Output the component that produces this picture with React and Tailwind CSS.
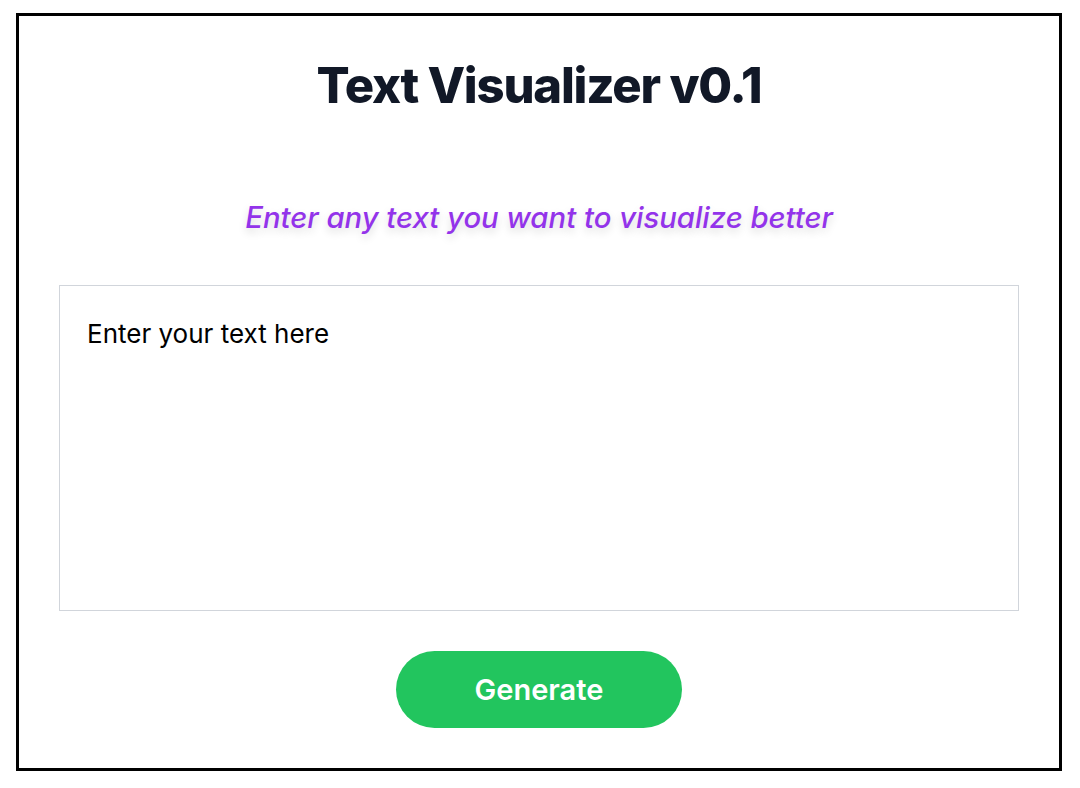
export default function App() {
    return (
        <div className="min-h-screen bg-white pt-[13px] pl-4 font-['Inter',sans-serif]">
            <div className="w-[1046px] border-[3px] border-black h-[758px] flex flex-col items-center px-10">
                <h1 className="mt-[45px] text-[49px] leading-[50px] font-extrabold text-[#111827] tracking-tight">
                    Text Visualizer v0.1
                </h1>
                <p className="mt-[89px] text-[29.3px] leading-[36px] italic font-medium text-[#9333ea] [text-shadow:0_4px_8px_rgba(0,0,0,0.15)]">
                    Enter any text you want to visualize better
                </p>
                <textarea
                    className="mt-[49px] w-[960px] h-[326px] border border-[#d1d5db] px-[27px] py-8 text-[26px] leading-[32px] text-black resize-none focus:outline-none"
                    defaultValue="Enter your text here"
                />
                <button className="mt-[40px] w-[286px] h-[77px] rounded-full bg-[#22c55e] text-white text-[29px] font-semibold">
                    Generate
                </button>
            </div>
        </div>
    );
}
